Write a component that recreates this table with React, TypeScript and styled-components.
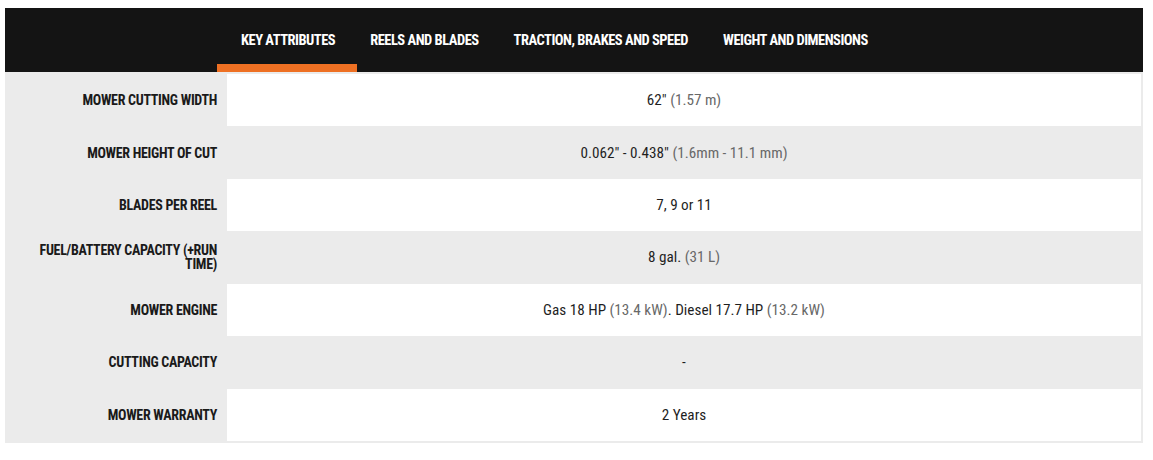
import React, { useState } from "react";
import styled, { createGlobalStyle } from "styled-components";

const GlobalStyle = createGlobalStyle`
  html, body { margin: 0; padding: 0; background: #ffffff; }
  body {
    font-family: "Roboto", "Liberation Sans", sans-serif;
    font-stretch: 75%;
  }
`;

const Page = styled.div`
  padding: 8px 10px 0 5px;
`;

const Panel = styled.section`
  width: 1138px;
`;

const TabBar = styled.nav`
  display: flex;
  height: 64px;
  background: #141414;
  padding-left: 212px;
`;

const Tab = styled.button<{ $active?: boolean }>`
  appearance: none;
  border: 0;
  margin: 0;
  background: transparent;
  color: #ffffff;
  font-family: inherit;
  font-stretch: 75%;
  font-weight: 700;
  font-size: 14.5px;
  letter-spacing: -0.5px;
  text-transform: uppercase;
  padding: 0 22px 0 24px;
  height: 64px;
  display: flex;
  align-items: center;
  cursor: pointer;
  box-shadow: ${(p) => (p.$active ? "inset 0 -8px 0 #ee7023" : "none")};
  & + & { margin-left: -11px; }
`;

const Table = styled.div`
  background: #ebebeb;
  padding: 2px 2px 2px 0;
  display: flex;
  flex-direction: column;
`;

const Row = styled.div`
  display: grid;
  grid-template-columns: 222px 1fr;
  height: 52.43px;
`;

const Label = styled.div`
  display: flex;
  align-items: center;
  justify-content: flex-end;
  text-align: right;
  padding: 0 10px 0 20px;
  font-weight: 700;
  font-size: 14px;
  letter-spacing: -0.3px;
  line-height: 14px;
  color: #1a1a1a;
  text-transform: uppercase;
`;

const Value = styled.div<{ $shaded?: boolean }>`
  display: flex;
  align-items: center;
  justify-content: center;
  background: ${(p) => (p.$shaded ? "#ebebeb" : "#ffffff")};
`;

const ValueText = styled.span`
  font-size: 15.2px;
  line-height: 18px;
  color: #1f1f1f;
`;

const Sub = styled.span`
  color: #686868;
`;

const tabs = [
  "Key Attributes",
  "Reels and Blades",
  "Traction, Brakes and Speed",
  "Weight and Dimensions",
];

type Spec = { label: string; value: React.ReactNode };

const specs: Spec[] = [
  { label: "Mower Cutting Width", value: <>62" <Sub>(1.57 m)</Sub></> },
  { label: "Mower Height of Cut", value: <>0.062" - 0.438" <Sub>(1.6mm - 11.1 mm)</Sub></> },
  { label: "Blades per Reel", value: <>7, 9 or 11</> },
  { label: "Fuel/Battery Capacity (+Run Time)", value: <>8 gal. <Sub>(31 L)</Sub></> },
  {
    label: "Mower Engine",
    value: (
      <>
        Gas 18 HP <Sub>(13.4 kW)</Sub>. Diesel 17.7 HP <Sub>(13.2 kW)</Sub>
      </>
    ),
  },
  { label: "Cutting Capacity", value: <>-</> },
  { label: "Mower Warranty", value: <>2 Years</> },
];

export default function App() {
  const [active, setActive] = useState(0);
  return (
    <Page>
      <GlobalStyle />
      <Panel>
        <TabBar>
          {tabs.map((t, i) => (
            <Tab key={t} $active={i === active} onClick={() => setActive(i)}>
              {t}
            </Tab>
          ))}
        </TabBar>
        <Table>
          {specs.map((s, i) => (
            <Row key={s.label}>
              <Label>{s.label}</Label>
              <Value $shaded={i % 2 === 1}>
                <ValueText>{s.value}</ValueText>
              </Value>
            </Row>
          ))}
        </Table>
      </Panel>
    </Page>
  );
}
